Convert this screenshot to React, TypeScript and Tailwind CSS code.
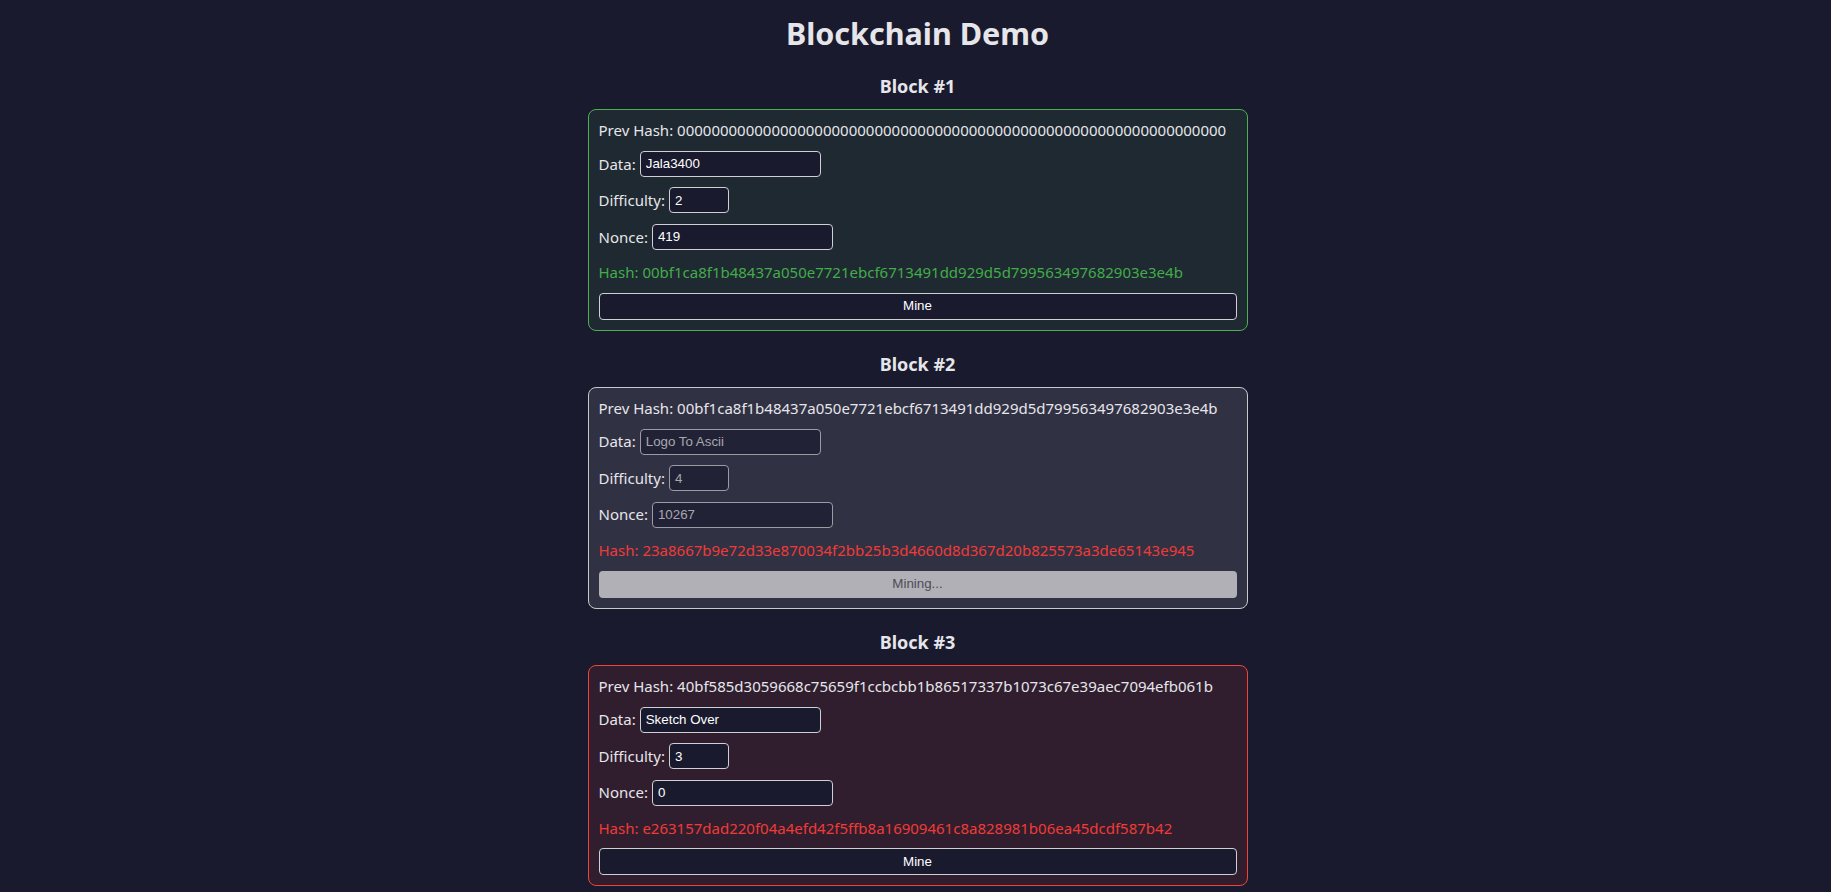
import React from 'react';

type Block = {
  id: number;
  prevHash: string;
  data: string;
  difficulty: string;
  nonce: string;
  hash: string;
  status: 'valid' | 'mining' | 'invalid';
};

const blocks: Block[] = [
  {
    id: 1,
    prevHash: '0000000000000000000000000000000000000000000000000000000000000000',
    data: 'Jala3400',
    difficulty: '2',
    nonce: '419',
    hash: '00bf1ca8f1b48437a050e7721ebcf6713491dd929d5d799563497682903e3e4b',
    status: 'valid',
  },
  {
    id: 2,
    prevHash: '00bf1ca8f1b48437a050e7721ebcf6713491dd929d5d799563497682903e3e4b',
    data: 'Logo To Ascii',
    difficulty: '4',
    nonce: '10267',
    hash: '23a8667b9e72d33e870034f2bb25b3d4660d8d367d20b825573a3de65143e945',
    status: 'mining',
  },
  {
    id: 3,
    prevHash: '40bf585d3059668c75659f1ccbcbb1b86517337b1073c67e39aec7094efb061b',
    data: 'Sketch Over',
    difficulty: '3',
    nonce: '0',
    hash: 'e263157dad220f04a4efd42f5ffb8a16909461c8a828981b06ea45dcdf587b42',
    status: 'invalid',
  },
];

const cardStyles = {
  valid: 'border-[#4caf50] bg-[#1f2931]',
  mining: 'border-[#c8c8cc] bg-[#313144]',
  invalid: 'border-[#f44336] bg-[#301e2f]',
};

const Field = ({
  label,
  value,
  width,
  disabled,
}: {
  label: string;
  value: string;
  width: string;
  disabled: boolean;
}) => (
  <div className="flex items-center gap-[4px] h-[26px]">
    <span>{label}</span>
    <input
      readOnly
      value={value}
      className={`${width} h-[26px] px-[5px] rounded-[4px] border font-['Liberation_Sans',Arial,sans-serif] text-[13.33px] outline-none ${
        disabled
          ? 'bg-[#222236] border-[#9b9ba3] text-[#a7a7ae]'
          : 'bg-[#1a1a2e] border-[#cfcfd4] text-white'
      }`}
    />
  </div>
);

const BlockCard = ({ block }: { block: Block }) => {
  const mining = block.status === 'mining';
  return (
    <div className="flex flex-col">
      <h3 className="text-center font-bold text-[18px] leading-[26px] mb-[10px]">Block #{block.id}</h3>
      <div className={`flex flex-col gap-[10.5px] border rounded-[8px] p-[10px] ${cardStyles[block.status]}`}>
        <p className="leading-[20.4px] whitespace-nowrap">Prev Hash: {block.prevHash}</p>
        <Field label="Data:" value={block.data} width="w-[181px]" disabled={mining} />
        <Field label="Difficulty:" value={block.difficulty} width="w-[60px]" disabled={mining} />
        <Field label="Nonce:" value={block.nonce} width="w-[181px]" disabled={mining} />
        <p
          className={`mt-[1.5px] leading-[20.4px] whitespace-nowrap ${
            block.status === 'valid' ? 'text-[#43ac4a]' : 'text-[#ef3b36]'
          }`}
        >
          Hash: {block.hash}
        </p>
        <button
          className={`h-[27px] w-full rounded-[4px] font-['Liberation_Sans',Arial,sans-serif] text-[13.33px] ${
            mining
              ? 'bg-[#b1b0b6] text-[#4d4d55]'
              : 'bg-[#1a1a2e] border border-[#cfcfd4] text-white'
          }`}
        >
          {mining ? 'Mining...' : 'Mine'}
        </button>
      </div>
    </div>
  );
};

export default function App() {
  return (
    <div className="min-h-screen w-full bg-[#1a1a2e] text-[#e6e6ea] font-['Noto_Sans',sans-serif] text-[15px] pt-[13px] pb-10 pl-[4px]">
      <h1 className="text-center font-bold text-[30.5px] leading-[40px]">Blockchain Demo</h1>
      <div className="w-[660px] mx-auto mt-[20px] flex flex-col gap-[20px]">
        {blocks.map((b) => (
          <BlockCard key={b.id} block={b} />
        ))}
      </div>
    </div>
  );
}
